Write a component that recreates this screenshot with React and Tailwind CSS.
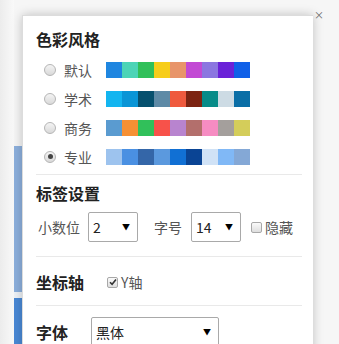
import React from 'react';

const palettes = [
  { name: '默认', checked: false, colors: ['#1f86e0', '#4cd4b6', '#31c05a', '#f7cd1a', '#e8956a', '#c249d4', '#8b76e0', '#6a22d8', '#1060e8'] },
  { name: '学术', checked: false, colors: ['#13b5f0', '#0a95d6', '#06506e', '#5e8aa6', '#ef5a3e', '#7c2412', '#078b88', '#cddbe4', '#0a6ea6'] },
  { name: '商务', checked: false, colors: ['#5a9bd0', '#f69034', '#31c05a', '#f7524a', '#b884cf', '#b36f6c', '#f68cc2', '#a49f9c', '#d4cd5a'] },
  { name: '专业', checked: true, colors: ['#9dc3ee', '#4a90e2', '#3466a8', '#5b99de', '#1170d4', '#0a4494', '#d0e2f6', '#80b8f6', '#84a8d6'] },
];

function Radio({ checked }) {
  return (
    <span className="w-[12px] h-[12px] rounded-full border border-[#b5b5b5] bg-gradient-to-b from-[#f4f4f4] to-[#d9d9d9] flex items-center justify-center shrink-0">
      {checked && <span className="w-[5px] h-[5px] rounded-full bg-[#444]" />}
    </span>
  );
}

function Checkbox({ checked }) {
  return (
    <span className="w-[11px] h-[11px] rounded-[2px] border border-[#a8a8a8] bg-gradient-to-b from-[#fafafa] to-[#dedede] flex items-center justify-center shrink-0">
      {checked && (
        <svg width="8" height="8" viewBox="0 0 8 8">
          <path d="M1 4.2 L3.1 6.3 L7 1.5" fill="none" stroke="#333" strokeWidth="1.6" />
        </svg>
      )}
    </span>
  );
}

function Select({ value, width }) {
  return (
    <div
      className={`h-[30px] border border-[#a9a9a9] rounded-[2px] bg-white flex items-center justify-between pl-[4px] pr-[7px] text-[14px] text-[#222] ${width}`}
    >
      <span>{value}</span>
      <span className="text-[8px] text-black">▼</span>
    </div>
  );
}

function Divider() {
  return <div className="h-px bg-[#e9e9e9]" />;
}

export default function App() {
  return (
    <div
      className="w-[339px] h-[344px] overflow-hidden bg-[#f6f6f6] flex relative"
      style={{ fontFamily: '"Noto Sans CJK SC", "Liberation Sans", sans-serif' }}
    >
      {/* left edge of the page behind */}
      <div className="w-[22px] shrink-0 flex">
        <div className="w-[14px] bg-gradient-to-r from-[#ececec] to-[#f9f9f9]" />
        <div className="w-[8px] flex flex-col">
          <div className="h-[146px]" />
          <div className="h-[146px] bg-[#8db0dd]" />
          <div className="h-[6px] bg-[#eef2f7]" />
          <div className="flex-1 bg-[#4a89d6]" />
        </div>
      </div>

      {/* panel */}
      <div className="mt-[15px] w-[291px] h-[340px] bg-white border-l border-t border-[#dcdcdc] shadow-[0_0_10px_rgba(0,0,0,0.22)] pl-[13px] pr-[11px] pt-[11px] text-[14px] text-[#555]">
        <div className="text-[16px] leading-[24px] font-bold text-[#222]">色彩风格</div>
        <div className="mt-[4px]">
          {palettes.map((p) => (
            <div key={p.name} className="h-[29px] flex items-center">
              <span className="ml-[8px]">
                <Radio checked={p.checked} />
              </span>
              <span className="ml-[8px] w-[28px] leading-none">{p.name}</span>
              <div className="ml-[14px] flex">
                {p.colors.map((c, i) => (
                  <span key={i} className="w-[16px] h-[16px]" style={{ background: c }} />
                ))}
              </div>
            </div>
          ))}
        </div>

        <div className="mt-[3px]">
          <Divider />
        </div>

        <div className="mt-[6px] text-[16px] leading-[24px] font-bold text-[#222]">标签设置</div>
        <div className="mt-[7px] flex items-center">
          <span className="ml-[2px]">小数位</span>
          <div className="ml-[8px]">
            <Select value="2" width="w-[50px]" />
          </div>
          <span className="ml-[16px]">字号</span>
          <div className="ml-[9px]">
            <Select value="14" width="w-[50px]" />
          </div>
          <span className="ml-[10px]">
            <Checkbox checked={false} />
          </span>
          <span className="ml-[3px]">隐藏</span>
        </div>

        <div className="mt-[14px]">
          <Divider />
        </div>

        <div className="mt-[13px] flex items-center h-[24px]">
          <span className="text-[16px] leading-[24px] font-bold text-[#222] w-[71px]">坐标轴</span>
          <Checkbox checked={true} />
          <span className="ml-[3px]">Y轴</span>
        </div>

        <div className="mt-[11px]">
          <Divider />
        </div>

        <div className="mt-[11px] flex items-center">
          <span className="text-[16px] leading-[24px] font-bold text-[#222] w-[55px]">字体</span>
          <Select value="黑体" width="w-[128px]" />
        </div>
      </div>

      {/* close mark */}
      <div className="absolute left-[314px] top-[10px] text-[10px] leading-none text-[#666]">×</div>
    </div>
  );
}
